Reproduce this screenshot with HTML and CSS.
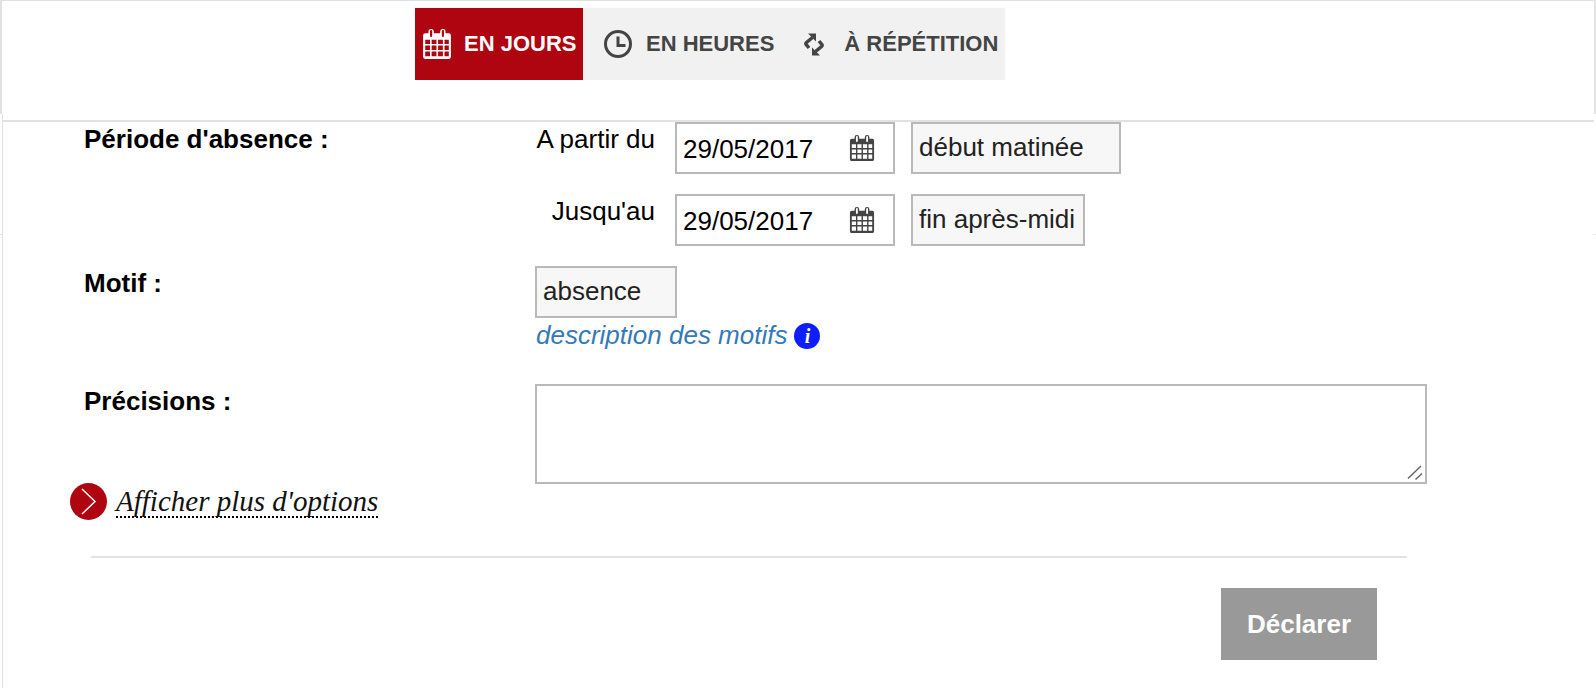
FILE: index.html
```html
<!DOCTYPE html>
<html lang="fr">
<head>
    <meta charset="UTF-8">
    <meta name="viewport" content="width=device-width, initial-scale=1.0">
    <title>Déclarer une absence</title>
    <link rel="stylesheet" href="styles.css">
</head>
<body>
    <svg class="icon-defs" width="0" height="0">
        <symbol id="cal" viewBox="0 0 28 28">
            <path fill="currentColor" fill-rule="evenodd" d="M3 4h3V2.500a2.500 2.500 0 0 1 5 0V4h6V2.500a2.500 2.500 0 0 1 5 0V4h3a2 2 0 0 1 2 2v20a2 2 0 0 1-2 2H3a2 2 0 0 1-2-2V6a2 2 0 0 1 2-2zM7.500 2v4.500a1 1 0 0 0 2 0V2a1 1 0 0 0-2 0zM18.500 2v4.500a1 1 0 0 0 2 0V2a1 1 0 0 0-2 0zM3 10v4h4.500v-4zM9 10v4h4.500v-4zM15 10v4h4.500v-4zM21 10v4h4v-4zM3 15.500v4h4.500v-4zM9 15.500v4h4.500v-4zM15 15.500v4h4.500v-4zM21 15.500v4h4v-4zM3 21v4.500h4.500V21zM9 21v4.500h4.500V21zM15 21v4.500h4.500V21zM21 21v4.500h4V21z"/>
        </symbol>
    </svg>

    <header class="top-bar">
        <nav class="tabs">
            <a class="tab tab-active">
                <svg class="tab-icon"><use href="#cal"/></svg>
                EN JOURS
            </a>
            <a class="tab tab-hours">
                <svg class="tab-icon" viewBox="0 0 30 30">
                    <circle cx="15" cy="15" r="12.500" fill="none" stroke="currentColor" stroke-width="3"/>
                    <path d="M15 7.500V16.500H22.500" fill="none" stroke="currentColor" stroke-width="3"/>
                </svg>
                EN HEURES
            </a>
            <a class="tab tab-repeat">
                <svg class="tab-icon-small" viewBox="0 0 20 23">
                    <g id="repeat-arrow">
                        <path fill="currentColor" d="M4 .5h8v8z"/>
                        <path fill="none" stroke="currentColor" stroke-width="3.500" d="M8.500 4.500L2.500 9.500Q1.300 10.800 2.500 12L5 15"/>
                    </g>
                    <use href="#repeat-arrow" transform="rotate(180 10 11.500)"/>
                </svg>
                À RÉPÉTITION
            </a>
        </nav>
    </header>
    <div class="top-rule"></div>

    <main class="content">
        <section class="form-row row-period">
            <div class="row-label">Période d'absence :</div>
            <div class="period-fields">
                <div class="period-line">
                    <span class="period-label">A partir du</span>
                    <div class="field date-field">
                        <span class="date-value">29/05/2017</span>
                        <svg class="date-icon"><use href="#cal"/></svg>
                    </div>
                    <div class="field select-field select-start">début matinée</div>
                </div>
                <div class="period-line">
                    <span class="period-label">Jusqu'au</span>
                    <div class="field date-field">
                        <span class="date-value">29/05/2017</span>
                        <svg class="date-icon"><use href="#cal"/></svg>
                    </div>
                    <div class="field select-field select-end">fin après-midi</div>
                </div>
            </div>
        </section>

        <section class="form-row row-motif">
            <div class="row-label">Motif :</div>
            <div>
                <div class="field select-field select-motif">absence</div>
                <a class="motif-link">description des motifs <span class="info-badge">i</span></a>
            </div>
        </section>

        <section class="form-row row-details">
            <div class="row-label">Précisions :</div>
            <div class="details-wrap">
                <textarea class="details-input"></textarea>
                <svg class="resize-grip" viewBox="0 0 16 16" width="16" height="16">
                    <path d="M1 13.500L14 1M8.500 14.500L15 8.500" fill="none" stroke="#666" stroke-width="1.500"/>
                </svg>
            </div>
        </section>

        <a class="more-options">
            <span class="more-circle">
                <svg viewBox="0 0 37 37" width="37" height="37">
                    <path d="M12 6l13 12.500L12 31" fill="none" stroke="#fff" stroke-width="1.500"/>
                </svg>
            </span>
            <span class="more-text">Afficher plus d'options</span>
        </a>

        <hr class="bottom-rule">

        <div class="actions">
            <button class="submit-btn">Déclarer</button>
        </div>
    </main>
</body>
</html>
```

FILE: styles.css
```css
:root {
    --line: #e2e2e2;
    --field-line: #b9b9b9;
    --red: #ae0511;
    --dark: #444;
}

* {
    margin: 0;
    padding: 0;
    box-sizing: border-box;
}

html, body {
    overflow: hidden;
}

body {
    font-family: 'Liberation Sans', Arial, sans-serif;
    font-size: 26px;
    color: #000;
    background: #fff;
    height: 688px;
}

.icon-defs {
    display: block;
}

/* Top bar */
.top-bar {
    height: 114px;
    border-top: 1px solid var(--line);
    border-left: 2px solid var(--line);
    border-right: 2px solid var(--line);
    padding: 7px 0 0 413px;
}

.top-rule {
    height: 8px;
    margin: 0 2px;
    border-left: 1px solid var(--line);
    border-bottom: 2px solid var(--line);
}

.tabs {
    display: flex;
    width: 590px;
    height: 72px;
    background: #f1f1f1;
}

.tab {
    display: flex;
    align-items: center;
    font-weight: 700;
    font-size: 22px;
    color: var(--dark);
    white-space: nowrap;
}

.tab-active {
    width: 168px;
    background: var(--red);
    color: #fff;
    padding-left: 7px;
    gap: 12px;
}

.tab-hours {
    padding-left: 20px;
    gap: 13px;
}

.tab-repeat {
    padding-left: 30px;
    gap: 20px;
}

.tab-icon {
    width: 30px;
    height: 30px;
}

.tab-icon-small {
    width: 20px;
    height: 23px;
}

/* Form */
.content {
    position: relative;
    height: 566px;
    border-left: 1px solid var(--line);
    margin-left: 2px;
    padding: 0 0 0 81px;
}

/* hairline ends showing either side of the page */
.content::before,
.content::after {
    content: "";
    position: absolute;
    top: 112px;
    width: 2px;
    height: 1px;
    background: var(--line);
}

.content::before {
    left: -3px;
}

.content::after {
    right: 0;
}

.form-row {
    display: grid;
    grid-template-columns: 451px 1fr;
}

.row-label {
    font-weight: 700;
    padding-top: 2px;
}

.period-line {
    display: flex;
    align-items: flex-start;
    margin-bottom: 20px;
}

.period-label {
    width: 120px;
    margin-right: 20px;
    text-align: right;
    padding-top: 2px;
}

.field {
    height: 52px;
    border: 2px solid var(--field-line);
    display: flex;
    align-items: center;
    padding: 0 6px;
}

.date-field {
    width: 220px;
    justify-content: space-between;
    padding-right: 18px;
    margin-right: 16px;
}

.date-value {
    padding-top: 2px;
}

.date-icon {
    width: 26px;
    height: 26px;
    color: #444;
}

.select-field {
    background: #f7f7f7;
    color: #222;
    padding-bottom: 2px;
}

.select-start {
    width: 210px;
}

.select-end {
    width: 174px;
}

.select-motif {
    width: 142px;
}

.motif-link {
    display: flex;
    align-items: center;
    gap: 7px;
    margin: 2px 0 0 1px;
    font-style: italic;
    color: #337ab7;
}

.info-badge {
    width: 26px;
    height: 26px;
    border-radius: 50%;
    background: #0f1eff;
    color: #fff;
    font-family: 'Liberation Serif', serif;
    font-weight: 700;
    font-size: 20px;
    line-height: 26px;
    text-align: center;
}

.row-details {
    margin-top: 33px;
}

.details-wrap {
    position: relative;
    width: 892px;
    height: 100px;
}

.details-input {
    display: block;
    width: 100%;
    height: 100%;
    border: 2px solid var(--field-line);
    background: #fff;
    resize: none;
}

.resize-grip {
    position: absolute;
    right: 4px;
    bottom: 3px;
}

.more-options {
    display: flex;
    align-items: center;
    gap: 9px;
    margin: -1px 0 0 -14px;
    width: max-content;
}

.more-circle {
    display: block;
    width: 37px;
    height: 37px;
    border-radius: 50%;
    background: var(--red);
}

.more-text {
    font-family: 'Liberation Serif', serif;
    font-style: italic;
    font-size: 29px;
    color: #111;
    line-height: 30px;
    border-bottom: 2px dotted #000;
}

.bottom-rule {
    border: 0;
    height: 2px;
    background: var(--line);
    width: 1316px;
    margin: 36px 0 0 7px;
}

.actions {
    width: 1293px;
    display: flex;
    justify-content: flex-end;
    margin-top: 30px;
}

.submit-btn {
    width: 156px;
    height: 72px;
    border: 0;
    background: #999;
    color: #fff;
    font-family: 'Liberation Sans', Arial, sans-serif;
    font-weight: 700;
    font-size: 26px;
}
```
